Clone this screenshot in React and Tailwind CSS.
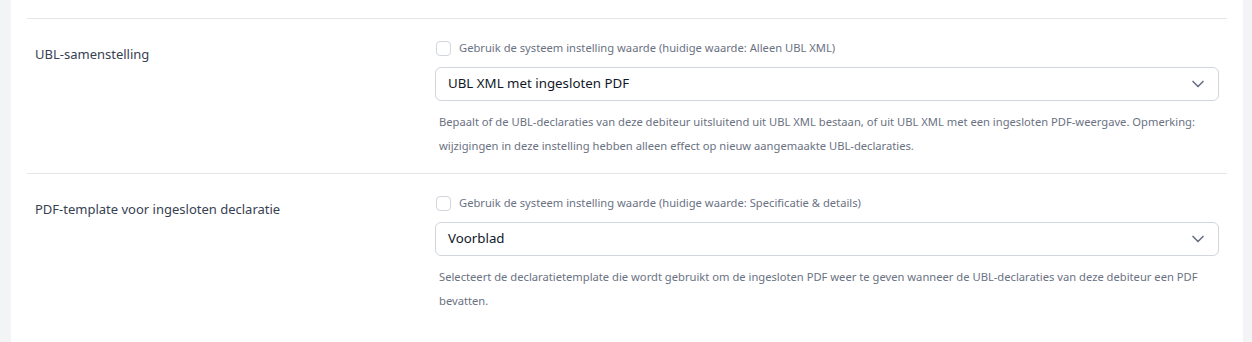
import React from 'react';
import { ChevronDown } from 'lucide-react';

const rows = [
  {
    label: 'UBL-samenstelling',
    current: 'Alleen UBL XML',
    value: 'UBL XML met ingesloten PDF',
    help: 'Bepaalt of de UBL-declaraties van deze debiteur uitsluitend uit UBL XML bestaan, of uit UBL XML met een ingesloten PDF-weergave. Opmerking: wijzigingen in deze instelling hebben alleen effect op nieuw aangemaakte UBL-declaraties.',
  },
  {
    label: 'PDF-template voor ingesloten declaratie',
    current: 'Specificatie & details',
    value: 'Voorblad',
    help: 'Selecteert de declaratietemplate die wordt gebruikt om de ingesloten PDF weer te geven wanneer de UBL-declaraties van deze debiteur een PDF bevatten.',
  },
];

const SettingRow = ({ label, current, value, help }) => (
  <div className="border-t border-gray-200 grid grid-cols-[408px_1fr] pr-2">
    <div className="pl-2 pt-[25px] text-[13px] leading-5 text-gray-700">{label}</div>
    <div className="pt-5 pb-[15px]">
      <label className="flex items-center h-[18px] gap-2 text-[11.2px] text-gray-500">
        <span className="ml-px w-[15px] h-[15px] rounded border border-gray-300 bg-white" />
        Gebruik de systeem instelling waarde (huidige waarde: {current})
      </label>
      <div className="mt-[10px] h-[34px] rounded-md border border-gray-300 bg-white flex items-center justify-between pl-3 pr-[10px] text-[13.3px] text-gray-900">
        <span>{value}</span>
        <ChevronDown className="w-5 h-5 text-gray-500" strokeWidth={2} />
      </div>
      <p className="mt-[9px] pl-1 text-[11.2px] leading-6 text-gray-500">{help}</p>
    </div>
  </div>
);

export default function App() {
  return (
    <div className="min-h-[342px] bg-gray-100 px-[11px] pr-[9px]" style={{ fontFamily: '"Noto Sans", sans-serif' }}>
      <div className="bg-white px-4 pt-[18px] min-h-[342px]">
        {rows.map((r) => (
          <SettingRow key={r.label} {...r} />
        ))}
      </div>
    </div>
  );
}
